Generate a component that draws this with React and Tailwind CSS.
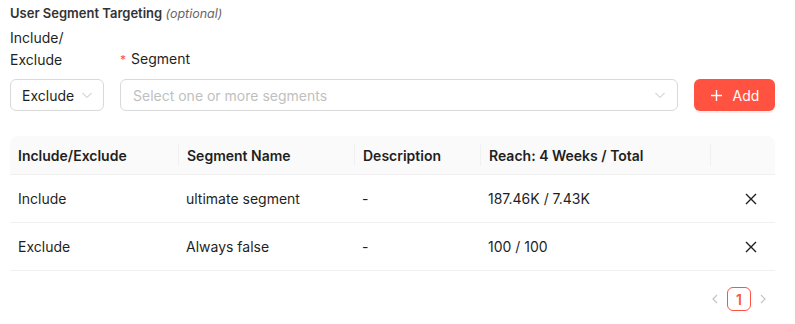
import React from 'react'

const Chevron = () => (
    <svg width="12" height="12" viewBox="0 0 12 12" fill="none" className="text-[#bfbfbf]">
        <path d="M1.5 4 L6 8.5 L10.5 4" stroke="currentColor" strokeWidth="1" />
    </svg>
)

const Close = () => (
    <svg width="12" height="12" viewBox="0 0 12 12" fill="none">
        <path d="M1 1 L11 11 M11 1 L1 11" stroke="#1f1f1f" strokeWidth="1.4" />
    </svg>
)

const rows = [
    { mode: 'Include', name: 'ultimate segment', desc: '-', reach: '187.46K / 7.43K' },
    { mode: 'Exclude', name: 'Always false', desc: '-', reach: '100 / 100' },
]

const App = () => {
    return (
        <div className="w-[795px] h-[324px] bg-white pl-[10px] pt-[5px] text-[#1f1f1f] text-[14px]" style={{ fontFamily: 'Inter, "Noto Sans", sans-serif' }}>
            <div className="h-[16px] leading-[16px] text-[13px] font-semibold text-[#333]">
                User Segment Targeting <span className="italic font-normal text-[#666] text-[12.5px]">(optional)</span>
            </div>

            <div className="flex items-end mt-[6px]">
                <div className="w-[94px] flex flex-col">
                    <div className="leading-[22px] pb-[8px]">Include/<br />Exclude</div>
                    <div className="h-[32px] border border-[#d9d9d9] rounded-[6px] flex items-center justify-between pl-[11px] pr-[10px]">
                        <span>Exclude</span>
                        <Chevron />
                    </div>
                </div>
                <div className="w-[558px] ml-[16px] flex flex-col">
                    <div className="leading-[22px] pb-[8px]">
                        <span className="text-[#ff4d4f] text-[12px] mr-[5px]">*</span>Segment
                    </div>
                    <div className="h-[32px] border border-[#d9d9d9] rounded-[6px] flex items-center justify-between pl-[12px] pr-[11px]">
                        <span className="text-[#bfbfbf]">Select one or more segments</span>
                        <Chevron />
                    </div>
                </div>
                <button className="ml-[16px] w-[81px] h-[32px] rounded-[6px] bg-[#ff5240] text-white flex items-center justify-center gap-[10px] shadow-[0_2px_0_rgba(255,82,64,0.1)]">
                    <svg width="13" height="13" viewBox="0 0 13 13" fill="none">
                        <path d="M6.5 1 V12 M1 6.5 H12" stroke="white" strokeWidth="1.4" />
                    </svg>
                    <span>Add</span>
                </button>
            </div>

            <div className="w-[765px] mt-[25px]">
                <div className="flex h-[39px] bg-[#fafafa] rounded-t-[8px] border-b border-[#f0f0f0] font-semibold items-center">
                    <div className="w-[168px] px-[8px] h-full flex items-center">Include/Exclude</div>
                    <div className="w-[176px] px-[8px] border-l border-[#f0f0f0] h-[22px] flex items-center">Segment Name</div>
                    <div className="w-[126px] px-[8px] border-l border-[#f0f0f0] h-[22px] flex items-center">Description</div>
                    <div className="w-[230px] px-[8px] border-l border-[#f0f0f0] h-[22px] flex items-center">Reach: 4 Weeks / Total</div>
                    <div className="w-[65px] border-l border-[#f0f0f0] h-[22px]"></div>
                </div>
                {rows.map((r, i) => (
                    <div key={i} className="flex h-[48px] border-b border-[#f0f0f0] items-center">
                        <div className="w-[168px] px-[8px]">{r.mode}</div>
                        <div className="w-[176px] px-[8px]">{r.name}</div>
                        <div className="w-[126px] px-[8px]">{r.desc}</div>
                        <div className="w-[230px] px-[8px]">{r.reach}</div>
                        <div className="w-[65px] flex justify-end pr-[18px]"><Close /></div>
                    </div>
                ))}
            </div>

            <div className="w-[765px] flex justify-end items-center mt-[16px] gap-[6px] pr-[6px]">
                <svg width="12" height="12" viewBox="0 0 12 12" fill="none">
                    <path d="M8 2 L4 6 L8 10" stroke="#c4c4c4" strokeWidth="1.2" />
                </svg>
                <div className="w-[24px] h-[24px] border border-[#ff5240] rounded-[6px] flex items-center justify-center text-[#ff5240] font-semibold">1</div>
                <svg width="12" height="12" viewBox="0 0 12 12" fill="none">
                    <path d="M4 2 L8 6 L4 10" stroke="#c4c4c4" strokeWidth="1.2" />
                </svg>
            </div>
        </div>
    )
}

export default App
